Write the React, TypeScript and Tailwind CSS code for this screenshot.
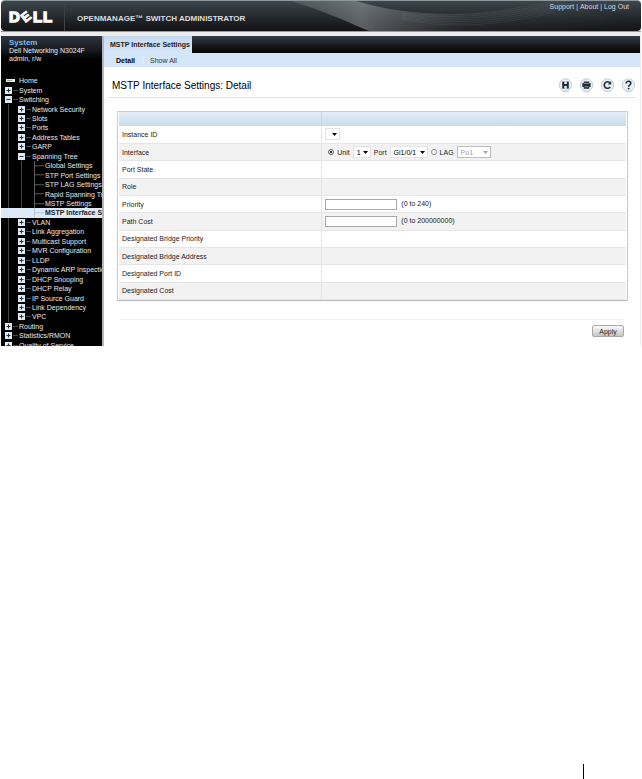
import type { ReactNode } from "react";

type Node = { label: string; depth: number; icon: "home" | "plus" | "minus" | "leaf"; active?: boolean };

const tree: Node[] = [
  { label: "Home", depth: 0, icon: "home" },
  { label: "System", depth: 0, icon: "plus" },
  { label: "Switching", depth: 0, icon: "minus" },
  { label: "Network Security", depth: 1, icon: "plus" },
  { label: "Slots", depth: 1, icon: "plus" },
  { label: "Ports", depth: 1, icon: "plus" },
  { label: "Address Tables", depth: 1, icon: "plus" },
  { label: "GARP", depth: 1, icon: "plus" },
  { label: "Spanning Tree", depth: 1, icon: "minus" },
  { label: "Global Settings", depth: 2, icon: "leaf" },
  { label: "STP Port Settings", depth: 2, icon: "leaf" },
  { label: "STP LAG Settings", depth: 2, icon: "leaf" },
  { label: "Rapid Spanning Tree", depth: 2, icon: "leaf" },
  { label: "MSTP Settings", depth: 2, icon: "leaf" },
  { label: "MSTP Interface Settings", depth: 2, icon: "leaf", active: true },
  { label: "VLAN", depth: 1, icon: "plus" },
  { label: "Link Aggregation", depth: 1, icon: "plus" },
  { label: "Multicast Support", depth: 1, icon: "plus" },
  { label: "MVR Configuration", depth: 1, icon: "plus" },
  { label: "LLDP", depth: 1, icon: "plus" },
  { label: "Dynamic ARP Inspection", depth: 1, icon: "plus" },
  { label: "DHCP Snooping", depth: 1, icon: "plus" },
  { label: "DHCP Relay", depth: 1, icon: "plus" },
  { label: "IP Source Guard", depth: 1, icon: "plus" },
  { label: "Link Dependency", depth: 1, icon: "plus" },
  { label: "VPC", depth: 1, icon: "plus" },
  { label: "Routing", depth: 0, icon: "plus" },
  { label: "Statistics/RMON", depth: 0, icon: "plus" },
  { label: "Quality of Service", depth: 0, icon: "plus" },
];

function TreeIcon({ icon, active }: { icon: Node["icon"]; active?: boolean }) {
  if (icon === "home") {
    return (
      <svg className="h-[7px] w-[14px] shrink-0" viewBox="0 0 14 7" aria-hidden="true">
        <rect x="1" y="2" width="9" height="3" fill="#e8eee8" />
        <rect x="2" y="3" width="5" height="1" fill="#8fa596" />
      </svg>
    );
  }
  if (icon === "leaf") {
    return (
      <svg className="h-full w-[14px] shrink-0" viewBox="0 0 14 9" preserveAspectRatio="none" aria-hidden="true">
        <path d="M3.5 0V9M3.5 4.5H13" stroke={active ? "#b9c4cf" : "#5c5c5c"} fill="none" />
      </svg>
    );
  }
  return (
    <svg className="h-[7px] w-[14px] shrink-0" viewBox="0 0 14 7" aria-hidden="true">
      <rect width="7" height="7" fill="#dfeaf2" />
      <path d={icon === "plus" ? "M1.5 3.5H5.5M3.5 1.5V5.5" : "M1.5 3.5H5.5"} stroke="#1d3442" />
      <path d="M8 3.5H13" stroke="#4a4a4a" />
    </svg>
  );
}

function Guide({ active }: { active?: boolean }) {
  return (
    <span className="flex h-full w-[13px] shrink-0 pl-[3px]">
      <span className={active ? "w-px" : "w-px bg-[#444444]"} />
    </span>
  );
}

function Sidebar() {
  return (
    <aside className="flex w-[101px] shrink-0 flex-col overflow-hidden bg-black text-[#e8e8e8]">
      <div className="h-[30px] shrink-0 bg-linear-to-b from-[#30363f] via-[#15181c] to-black px-2 pt-[3px] leading-[8px]">
        <div className="text-[8px] font-bold text-[#6fb9f2]">System</div>
        <div className="whitespace-nowrap">Dell Networking N3024F</div>
        <div>admin, r/w</div>
      </div>
      <nav className="mt-[10px] h-[270px] overflow-hidden" aria-label="Switch features">
        <ul className="grid h-[274px] auto-rows-fr">
          {tree.map((n) => (
            <li key={n.label} className={n.active ? "min-h-0 bg-[#dbe9f8] font-bold text-[#222222]" : "min-h-0"}>
              <a href="#" className="flex h-full items-center pl-[4px] leading-[9px] whitespace-nowrap">
                {n.depth > 0 && <Guide active={n.active} />}
                {n.depth > 1 && <Guide active={n.active} />}
                <TreeIcon icon={n.icon} active={n.active} />
                <span>{n.label}</span>
              </a>
            </li>
          ))}
        </ul>
      </nav>
    </aside>
  );
}

function Header() {
  return (
    <header className="relative flex h-[31px] overflow-hidden rounded-sm border-t border-[#8d979b] bg-linear-to-b from-[#3d464e] to-[#111214] text-white">
      <svg className="absolute inset-y-0 left-[290px] h-full w-[350px]" viewBox="0 0 350 30" preserveAspectRatio="none" aria-hidden="true">
        <defs>
          <linearGradient id="beam" x1="0" y1="0" x2="1" y2="0">
            <stop offset="0" stopColor="#899097" stopOpacity="0.25" />
            <stop offset="0.2" stopColor="#a0a5aa" stopOpacity="0.5" />
            <stop offset="0.5" stopColor="#70757a" stopOpacity="0.15" />
            <stop offset="1" stopColor="#70757a" stopOpacity="0" />
          </linearGradient>
        </defs>
        <path d="M0 0H65C125 18 195 16 270 0L350 30H78C50 18 30 9 0 0Z" fill="url(#beam)" />
        {[0, 2, 4, 6, 8, 10, 12].map((d) => (
          <path key={d} d={`M110 ${12 + d / 2}C165 ${18 + d} 215 ${10 + d} 262 ${d}`} stroke="#8b949b" strokeOpacity="0.22" strokeWidth="0.6" fill="none" />
        ))}
      </svg>
      <div className="flex w-[64px] shrink-0 items-center border-r border-[#3c4146] pl-2">
        <svg className="h-[24px] w-[46px] overflow-visible" viewBox="0 0 46 24" role="img" aria-label="Dell">
          <g fill="#ffffff" stroke="#ffffff" strokeWidth="1.4" fontFamily="Liberation Sans, sans-serif" fontWeight="700" fontSize="15">
            <text x="0" y="18">D</text>
            <text x="12" y="17" fontSize="13" strokeWidth="0.9" transform="rotate(-38 17 12)">E</text>
            <text x="24" y="18">L</text>
            <text x="34" y="18">L</text>
          </g>
        </svg>
      </div>
      <div className="pt-[13px] pl-3 text-[8px] leading-[10px] font-bold whitespace-nowrap text-[#dddddd]">
        OPENMANAGE™ SWITCH ADMINISTRATOR
      </div>
      <nav className="relative ml-auto flex gap-[2px] pt-[2px] pr-3 leading-[8px] text-[#d6d9dc]" aria-label="Session">
        <a href="#">Support</a>
        <span>|</span>
        <a href="#">About</a>
        <span>|</span>
        <a href="#">Log Out</a>
      </nav>
    </header>
  );
}

function ToolButton({ label, children }: { label: string; children: ReactNode }) {
  return (
    <button type="button" aria-label={label} className="h-[15px] w-[15px]">
      <svg className="h-[15px] w-[15px]" viewBox="0 0 15 15" aria-hidden="true">
        <ellipse cx="7.5" cy="13.8" rx="4.5" ry="0.8" fill="#e2e4e6" />
        <circle cx="7.5" cy="7" r="6.2" fill="#e9f0f5" stroke="#b7c8d4" strokeWidth="0.8" />
        {children}
      </svg>
    </button>
  );
}

function Select({ label, value, width, disabled, hideLabel }: { label: string; value: string; width: string; disabled?: boolean; hideLabel?: boolean }) {
  return (
    <label className="flex items-center gap-[3px]">
      <span className={hideLabel ? "sr-only" : ""}>{label}</span>
      <span className={`relative flex ${width}`}>
        <select
          disabled={disabled}
          className={`h-[12px] w-full appearance-none border pl-[3px] leading-[9px] ${disabled ? "border-[#bdbdbd] bg-white text-[#a0a0a0] opacity-100" : "border-[#e3e3e3] bg-white text-black"}`}
        >
          <option>{value}</option>
        </select>
        <svg className="pointer-events-none absolute top-[5px] right-[3px] h-[3px] w-[5px]" viewBox="0 0 5 3" aria-hidden="true">
          <path d="M0 0H5L2.5 3Z" fill={disabled ? "#a8a8a8" : "#000000"} />
        </svg>
      </span>
    </label>
  );
}

function NumberField({ id, hint }: { id: string; hint: string }) {
  return (
    <div className="flex items-center gap-1">
      <input id={id} type="text" className="h-[11px] w-[72px] border border-[#a8a8a8] bg-white px-[2px]" />
      <span className="pb-px">{hint}</span>
    </div>
  );
}

const radio =
  "h-[6px] w-[6px] appearance-none rounded-full border border-[#8a8a8a] bg-white checked:bg-black checked:shadow-[inset_0_0_0_1px_white]";

const rows: { label: string; id?: string; control?: ReactNode }[] = [
  { label: "Instance ID", control: <Select label="Instance ID" hideLabel value="" width="w-[15px]" /> },
  {
    label: "Interface",
    control: (
      <div className="flex items-center gap-[3px] pl-[3px]">
        <input type="radio" name="interface" id="unit-choice" aria-label="Unit and port" defaultChecked className={radio} />
        <Select label="Unit" value="1" width="w-[18px]" />
        <Select label="Port" value="Gi1/0/1" width="w-[38px]" />
        <input type="radio" name="interface" id="lag-choice" aria-label="LAG" className={radio} />
        <Select label="LAG" value="Po1" width="w-[34px]" disabled />
      </div>
    ),
  },
  { label: "Port State" },
  { label: "Role" },
  { label: "Priority", id: "priority", control: <NumberField id="priority" hint="(0 to 240)" /> },
  { label: "Path Cost", id: "path-cost", control: <NumberField id="path-cost" hint="(0 to 200000000)" /> },
  { label: "Designated Bridge Priority" },
  { label: "Designated Bridge Address" },
  { label: "Designated Port ID" },
  { label: "Designated Cost" },
];

function Content() {
  return (
    <main className="flex min-w-0 flex-1 flex-col border-r border-l-2 border-r-[#eeeeee] border-l-[#b5b5ba] bg-white">
      <div className="flex h-[17px] bg-linear-to-b from-[#353b44] to-[#050505]">
        <a href="#" className="bg-linear-to-b from-[#c5d9ee] to-[#d5e6f8] pr-[2px] pl-[6px] leading-[18px] font-bold whitespace-nowrap text-[#222222]">
          MSTP Interface Settings
        </a>
      </div>
      <nav className="flex h-[14px] bg-[#d5e6f8] pl-3 leading-[15px] text-[#333333]" aria-label="Views">
        <a href="#" className="font-bold text-black">Detail</a>
        <span className="my-[3px] mr-[6px] ml-2 w-px bg-[#e6f0fb]" />
        <a href="#">Show All</a>
      </nav>
      <div className="mr-1 ml-1 flex h-[31px] items-center border-b border-[#e2e2e2] pl-1">
        <h1 className="pt-[8px] text-[10px] leading-[14px] text-black">
          MSTP Interface Settings: Detail
        </h1>
        <div className="ml-auto flex gap-[6px] pt-[6px]">
          <ToolButton label="Save">
            <path d="M4.2 3.6H10.8V10.6H4.2Z" fill="#222b33" />
            <path d="M6.3 3.4H8.8V5.9H6.3ZM6.3 8H8.8V10.8H6.3Z" fill="#e9f0f5" />
          </ToolButton>
          <ToolButton label="Print">
            <path d="M4.8 3.4H10.2V5H11.6V9H10.2V10.7H4.8V9H3.4V5H4.8Z" fill="#222b33" />
            <path d="M4.8 5.3H10.2M5.4 8.8H9.6" stroke="#aab4bc" strokeWidth="0.8" />
          </ToolButton>
          <ToolButton label="Refresh">
            <path d="M10.2 9A3.3 3.3 0 1 1 9.7 4.5" stroke="#222b33" strokeWidth="1.6" fill="none" />
            <path d="M11.2 3V6.6H7.7Z" fill="#222b33" />
          </ToolButton>
          <ToolButton label="Help">
            <path d="M5.2 5.4C5.2 2.6 9.8 2.7 9.8 5.3C9.8 7 7.6 6.8 7.6 8.7" stroke="#222b33" strokeWidth="1.5" fill="none" />
            <circle cx="7.6" cy="10.6" r="0.95" fill="#222b33" />
          </ToolButton>
        </div>
      </div>
      <div className="mt-[13px] mr-3 ml-[13px] border border-[#c9ced2] border-b-[#b9bdc0] px-px shadow-xs">
        <table className="h-[188px] w-full border-collapse text-left">
          <thead>
            <tr className="h-[14px] bg-linear-to-b from-[#e3eff8] to-[#c8dbe9]">
              <th className="w-[40%] border-r border-[#c6d8e5] p-0"><span className="sr-only">Setting</span></th>
              <th className="p-0"><span className="sr-only">Value</span></th>
            </tr>
          </thead>
          <tbody>
            {rows.map((r) => (
              <tr key={r.label} className="h-[17px] border-b border-[#e6e6e6] odd:bg-white even:bg-[#f2f2f2]">
                <th scope="row" className="border-r border-[#e6e6e6] py-0 pr-0 pl-[3px] font-normal">
                  {r.id ? <label htmlFor={r.id}>{r.label}</label> : r.label}
                </th>
                <td className="py-0 pr-0 pl-[3px]">{r.control}</td>
              </tr>
            ))}
          </tbody>
        </table>
      </div>
      <div className="mt-[18px] mr-4 ml-4 flex justify-end border-t border-[#f0f0f0] pt-[5px]">
        <button
          type="button"
          className="h-[12px] w-[32px] rounded-xs border border-[#a9a9a9] bg-linear-to-b from-[#fafafa] to-[#c6c6c6] leading-[9px] text-[#222222]"
        >
          Apply
        </button>
      </div>
    </main>
  );
}

export default function App() {
  return (
    <div className="flex min-h-screen flex-col bg-white font-['Liberation_Sans',Arial,sans-serif] text-[7px] leading-[9px] text-[#222222]">
      <div className="px-px">
        <Header />
        <div className="h-[5px] border-t border-[#9a9a9a] bg-[#ececec]" />
        <div className="flex">
          <Sidebar />
          <Content />
        </div>
      </div>
      <footer className="mt-auto flex justify-end pr-[58px]">
        <span className="h-[15px] w-px bg-black" />
      </footer>
    </div>
  );
}
